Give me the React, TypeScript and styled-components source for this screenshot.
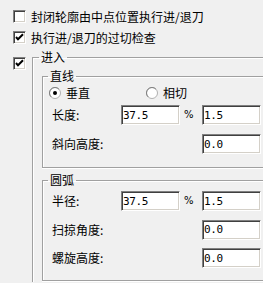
import styled, { createGlobalStyle } from "styled-components";

const Global = createGlobalStyle`
  html, body {
    margin: 0;
    padding: 0;
    background: #f0f0f0;
    overflow: hidden;
  }
  body {
    font-family: "Noto Sans CJK SC", "Noto Sans", sans-serif;
    font-size: 12px;
    color: #000;
  }
`;

const Page = styled.div`
  width: 263px;
  height: 283px;
  padding: 6px 0 0 13px;
  box-sizing: border-box;
  overflow: hidden;
`;

const CheckRow = styled.label`
  display: flex;
  align-items: center;
  gap: 5px;
  height: 21px;
  line-height: 14px;
  white-space: nowrap;
`;

const Box = styled.span`
  flex: none;
  width: 13px;
  height: 13px;
  box-sizing: border-box;
  background: #fff;
  border: 1px solid;
  border-color: #808080 #fff #fff #808080;
  box-shadow: inset 1px 1px 0 #404040, inset -1px -1px 0 #d4d0c8;
  display: flex;
  align-items: center;
  justify-content: center;
`;

const SectionRow = styled.div`
  display: flex;
  align-items: flex-start;
  gap: 6px;
  margin-top: 2px;
  ${Box} {
    margin-top: 7px;
  }
`;

// group boxes run off the right (and, for the outer one, the bottom) of the window
const Group = styled.fieldset<{ $indent?: number; $top?: number; $bottom?: number; $openBottom?: boolean }>`
  flex: 1;
  min-inline-size: 0;
  margin: ${(p) => p.$top ?? 0}px 0 0 ${(p) => p.$indent ?? 0}px;
  padding: 0 0 ${(p) => p.$bottom ?? 0}px 0;
  border: 1px solid #a0a0a0;
  border-right: 0;
  border-bottom: ${(p) => (p.$openBottom ? "0" : "1px solid #a0a0a0")};
  box-shadow: ${(p) => (p.$openBottom ? "" : "0 1px 0 #fff, ")}inset 1px 1px 0 #fff;
  line-height: 14px;
`;

const Legend = styled.legend<{ $offset: number }>`
  margin-left: ${(p) => p.$offset}px;
  padding: 0 2px;
  line-height: 14px;
`;

const RadioRow = styled.div`
  display: flex;
  align-items: center;
  height: 16px;
  margin-top: 2px;
  padding-left: 6px;
`;

const RadioOption = styled.label<{ $width?: number }>`
  display: flex;
  align-items: center;
  gap: 5px;
  width: ${(p) => (p.$width ? `${p.$width}px` : "auto")};
`;

const Fields = styled.div<{ $top: number; $gap: number }>`
  display: flex;
  flex-direction: column;
  gap: ${(p) => p.$gap}px;
  margin-top: ${(p) => p.$top}px;
`;

const FieldRow = styled.div`
  display: grid;
  grid-template-columns: 69px 59px 22px 59px;
  align-items: center;
  height: 20px;
  padding-left: 9px;
`;

const FieldLabel = styled.span`
  white-space: nowrap;
`;

const Unit = styled.span`
  padding-left: 4px;
  font-size: 10px;
  font-family: "DejaVu Sans", sans-serif;
`;

const Edit = styled.input`
  width: 59px;
  height: 20px;
  box-sizing: border-box;
  margin: 0;
  padding: 0 0 0 1px;
  background: #fff;
  border: 1px solid;
  border-color: #808080 #fff #fff #808080;
  box-shadow: inset 1px 1px 0 #404040, inset -1px -1px 0 #d4d0c8;
  font-family: "DejaVu Sans Mono", monospace;
  font-size: 11px;
  letter-spacing: -0.4px;
  color: #000;
  outline: none;
`;

const Check = ({ on }: { on: boolean }) => (
  <Box>
    {on && (
      <svg width="9" height="9" viewBox="0 0 9 9">
        <polyline points="1,4 3,6.3 8,1.3" fill="none" stroke="#000" strokeWidth="2" />
      </svg>
    )}
  </Box>
);

const Radio = ({ on }: { on: boolean }) => (
  <svg width="12" height="12" viewBox="0 0 12 12">
    <circle cx="6" cy="6" r="5.5" fill="#fff" stroke="#b0b0b0" />
    <path d="M2.1 9.9 A5.5 5.5 0 0 1 9.9 2.1" fill="none" stroke="#808080" />
    {on && <circle cx="6" cy="6" r="2" fill="#000" />}
  </svg>
);

type Field = { label: string; a?: string; b: string };

const Row = ({ label, a, b }: Field) => (
  <FieldRow>
    <FieldLabel>{label}</FieldLabel>
    {a ? <Edit readOnly defaultValue={a} /> : <span />}
    {a ? <Unit>%</Unit> : <span />}
    <Edit readOnly defaultValue={b} />
  </FieldRow>
);

const lineFields: Field[] = [
  { label: "长度:", a: "37.5", b: "1.5" },
  { label: "斜向高度:", b: "0.0" },
];

const arcFields: Field[] = [
  { label: "半径:", a: "37.5", b: "1.5" },
  { label: "扫掠角度:", b: "0.0" },
  { label: "螺旋高度:", b: "0.0" },
];

export default function App() {
  return (
    <>
      <Global />
      <Page>
        <CheckRow>
          <Check on={false} />
          封闭轮廓由中点位置执行进/退刀
        </CheckRow>
        <CheckRow>
          <Check on />
          执行进/退刀的过切检查
        </CheckRow>
        <SectionRow>
          <Check on />
          <Group $bottom={1} $openBottom>
            <Legend $offset={6}>进入</Legend>
            <Group $indent={9} $top={5} $bottom={13}>
              <Legend $offset={5}>直线</Legend>
              <RadioRow>
                <RadioOption $width={97}>
                  <Radio on />
                  垂直
                </RadioOption>
                <RadioOption>
                  <Radio on={false} />
                  相切
                </RadioOption>
              </RadioRow>
              <Fields $top={4} $gap={9}>
                {lineFields.map((f) => (
                  <Row key={f.label} {...f} />
                ))}
              </Fields>
            </Group>
            <Group $indent={9} $top={5} $bottom={12}>
              <Legend $offset={5}>圆弧</Legend>
              <Fields $top={4} $gap={8.5}>
                {arcFields.map((f) => (
                  <Row key={f.label} {...f} />
                ))}
              </Fields>
            </Group>
          </Group>
        </SectionRow>
      </Page>
    </>
  );
}
